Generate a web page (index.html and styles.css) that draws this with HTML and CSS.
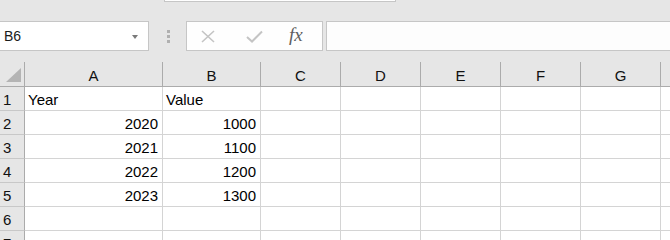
FILE: index.html
```html
<!DOCTYPE html>
<html lang="en">
<head>
  <meta charset="UTF-8">
  <title>Sheet1</title>
  <link rel="stylesheet" href="styles.css">
</head>
<body>

<div class="ribbon">
  <div class="ribbon-tab"></div>
</div>

<div class="formula-bar">
  <div class="name-box">
    <span>B6</span>
    <span class="caret"></span>
  </div>
  <div class="grip"><i></i><i></i><i></i></div>
  <div class="fx-box">
    <svg class="icon" width="16" height="13" viewBox="0 0 16 13">
      <path d="M2 1 L14 12 M14 1 L2 12" stroke="#c4c4c4" stroke-width="1.6" fill="none"/>
    </svg>
    <svg class="icon" width="17" height="13" viewBox="0 0 17 13">
      <path d="M1 7 L6 11.5 L16 1.5" stroke="#c4c4c4" stroke-width="2" fill="none"/>
    </svg>
    <span class="fx">fx</span>
  </div>
  <div class="formula-input"></div>
</div>

<div class="sheet">
  <!-- header -->
  <div class="corner">
    <svg width="24" height="24" viewBox="0 0 24 24"><polygon points="21,6 21,20 6,20" fill="#b4b4b4"/></svg>
  </div>
  <div class="hd">A</div><div class="hd">B</div><div class="hd">C</div><div class="hd">D</div>
  <div class="hd">E</div><div class="hd">F</div><div class="hd">G</div><div class="hd"></div>

  <!-- row 1 -->
  <div class="rh">1</div>
  <div class="c">Year</div><div class="c">Value</div><div class="c"></div><div class="c"></div>
  <div class="c"></div><div class="c"></div><div class="c"></div><div class="c"></div>

  <!-- row 2 -->
  <div class="rh">2</div>
  <div class="c num">2020</div><div class="c num">1000</div><div class="c"></div><div class="c"></div>
  <div class="c"></div><div class="c"></div><div class="c"></div><div class="c"></div>

  <!-- row 3 -->
  <div class="rh">3</div>
  <div class="c num">2021</div><div class="c num">1100</div><div class="c"></div><div class="c"></div>
  <div class="c"></div><div class="c"></div><div class="c"></div><div class="c"></div>

  <!-- row 4 -->
  <div class="rh">4</div>
  <div class="c num">2022</div><div class="c num">1200</div><div class="c"></div><div class="c"></div>
  <div class="c"></div><div class="c"></div><div class="c"></div><div class="c"></div>

  <!-- row 5 -->
  <div class="rh">5</div>
  <div class="c num">2023</div><div class="c num">1300</div><div class="c"></div><div class="c"></div>
  <div class="c"></div><div class="c"></div><div class="c"></div><div class="c"></div>

  <!-- row 6 -->
  <div class="rh">6</div>
  <div class="c"></div><div class="c"></div><div class="c"></div><div class="c"></div>
  <div class="c"></div><div class="c"></div><div class="c"></div><div class="c"></div>

  <!-- row 7 -->
  <div class="rh">7</div>
  <div class="c"></div><div class="c"></div><div class="c"></div><div class="c"></div>
  <div class="c"></div><div class="c"></div><div class="c"></div><div class="c"></div>
</div>

</body>
</html>
```

FILE: styles.css
```css
* {
  box-sizing: border-box;
}
html, body {
  margin: 0;
  overflow: hidden;
}
body {
  font-family: "Liberation Sans", Arial, sans-serif;
  background: #e6e6e6;
  width: 670px;
  height: 240px;
}

/* top strip */
.ribbon {
  height: 21px;
}
.ribbon-tab {
  margin-left: 164px;
  width: 232px;
  height: 2px;
  background: #fff;
  border: 1px solid #c6c6c6;
  border-top: none;
}

/* formula bar */
.formula-bar {
  display: flex;
  height: 30px;
  margin-bottom: 11px;
}
.name-box {
  width: 149px;
  background: #fff;
  border: 1px solid #c6c6c6;
  border-left: none;
  display: flex;
  align-items: center;
  justify-content: space-between;
  padding: 0 10px 0 4px;
  font-size: 14px;
  color: #1a1a1a;
}
.caret {
  width: 0;
  height: 0;
  border-left: 3px solid transparent;
  border-right: 3px solid transparent;
  border-top: 4px solid #7a7a7a;
  margin-top: 1px;
}
.grip {
  width: 37px;
  display: flex;
  flex-direction: column;
  align-items: center;
  justify-content: center;
  gap: 2px;
  padding-left: 1px;
}
.grip i {
  display: block;
  width: 3px;
  height: 3px;
  background: #b0b0b0;
}
.fx-box {
  width: 137px;
  background: #fefefe;
  border: 1px solid #c6c6c6;
  display: flex;
  align-items: center;
  padding-left: 13px;
}
.fx-box .icon:nth-child(2) {
  margin-left: 30px;
}
.fx {
  margin-left: 26px;
  font-family: "Liberation Serif", "Times New Roman", serif;
  font-style: italic;
  font-size: 19px;
  color: #5e5e5e;
  margin-top: -2px;
}
.formula-input {
  flex: 1;
  margin-left: 3px;
  background: #fdfdfd;
  border: 1px solid #c6c6c6;
  border-right: none;
}

/* grid */
.sheet {
  display: grid;
  grid-template-columns: 25px 138px 98px repeat(6, 80px);
  grid-template-rows: 25px repeat(7, 24px);
  font-size: 15px;
}
.corner, .hd, .rh {
  background: #e6e6e6;
  color: #111;
}
.corner {
  border-right: 1px solid #ababab;
  border-bottom: 1px solid #ababab;
}
.corner svg {
  display: block;
}
.hd {
  border-bottom: 1px solid #ababab;
  border-right: 1px solid #ababab;
  display: flex;
  align-items: center;
  justify-content: center;
  padding-top: 2px;
}
.rh {
  border-right: 1px solid #ababab;
  border-bottom: 1px solid #c8c8c8;
  display: flex;
  align-items: center;
  padding: 1px 0 0 3px;
}
.c {
  background: #fff;
  border-right: 1px solid #d4d4d4;
  border-bottom: 1px solid #d4d4d4;
  display: flex;
  align-items: center;
  padding: 1px 3px 0 3px;
  color: #000;
  white-space: nowrap;
}
.num {
  justify-content: flex-end;
  padding-right: 4px;
}
```
